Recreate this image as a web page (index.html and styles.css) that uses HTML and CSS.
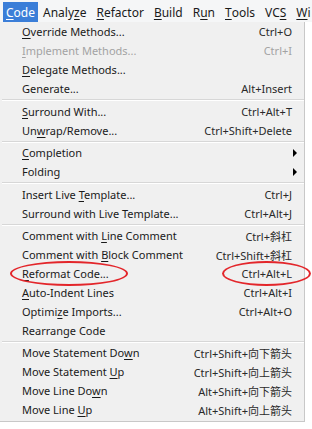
FILE: index.html
```html
<!DOCTYPE html>
<html lang="en">
<head>
  <meta charset="UTF-8" />
  <title>Code menu</title>
  <link rel="stylesheet" href="styles.css">
</head>
<body>
  <div class="menubar">
    <span class="top active"><u>C</u>ode</span>
    <span class="top">Analy<u>z</u>e</span>
    <span class="top"><u>R</u>efactor</span>
    <span class="top"><u>B</u>uild</span>
    <span class="top">R<u>u</u>n</span>
    <span class="top"><u>T</u>ools</span>
    <span class="top">VC<u>S</u></span>
    <span class="top last"><u>W</u>i</span>
  </div>

  <div class="menu">
    <div class="item"><span><u>O</u>verride Methods...</span><span class="key">Ctrl+O</span></div>
    <div class="item disabled"><span><u>I</u>mplement Methods...</span><span class="key">Ctrl+I</span></div>
    <div class="item"><span><u>D</u>elegate Methods...</span><span class="key"></span></div>
    <div class="item"><span>Generate...</span><span class="key">Alt+Insert</span></div>
    <div class="sep"></div>
    <div class="item"><span><u>S</u>urround With...</span><span class="key">Ctrl+Alt+T</span></div>
    <div class="item"><span>Un<u>w</u>rap/Remove...</span><span class="key">Ctrl+Shift+Delete</span></div>
    <div class="sep thin"></div>
    <div class="item"><span><u>C</u>ompletion</span><span class="arrow"></span></div>
    <div class="item"><span>Folding</span><span class="arrow"></span></div>
    <div class="sep"></div>
    <div class="item"><span>Insert Live <u>T</u>emplate...</span><span class="key">Ctrl+J</span></div>
    <div class="item"><span>Surround with Live Template...</span><span class="key">Ctrl+Alt+J</span></div>
    <div class="sep thin"></div>
    <div class="item"><span>Comment with <u>L</u>ine Comment</span><span class="key">Ctrl+斜杠</span></div>
    <div class="item"><span>Comment with <u>B</u>lock Comment</span><span class="key">Ctrl+Shift+斜杠</span></div>
    <div class="item marked">
      <span><u>R</u>eformat Code...</span><span class="key">Ctrl+Alt+L</span>
      <span class="ring ring-left"></span>
      <span class="ring ring-right"></span>
    </div>
    <div class="item"><span><u>A</u>uto-Indent Lines</span><span class="key">Ctrl+Alt+I</span></div>
    <div class="item"><span>Optimi<u>z</u>e Imports...</span><span class="key">Ctrl+Alt+O</span></div>
    <div class="item"><span>Rearrange Code</span><span class="key"></span></div>
    <div class="sep thin"></div>
    <div class="item"><span>Move Statement Do<u>w</u>n</span><span class="key">Ctrl+Shift+向下箭头</span></div>
    <div class="item"><span>Move Statement <u>U</u>p</span><span class="key">Ctrl+Shift+向上箭头</span></div>
    <div class="item"><span>Move Line Do<u>w</u>n</span><span class="key">Alt+Shift+向下箭头</span></div>
    <div class="item"><span>Move Line <u>U</u>p</span><span class="key">Alt+Shift+向上箭头</span></div>
  </div>
</body>
</html>
```

FILE: styles.css
```css
body {
  margin: 0;
  background: #ffffff;
  font-family: "Noto Sans", "Noto Sans CJK SC", sans-serif;
  font-size: 11px;
  color: #1a1a1a;
  width: 312px;
  overflow: hidden;
}

u {
  text-decoration-thickness: 1px;
  text-underline-offset: 2px;
}

.menubar {
  display: flex;
  height: 22px;
  align-items: stretch;
  padding-left: 3px;
  background: #f5f6f7;
  white-space: nowrap;
  overflow: hidden;
}

.top {
  display: flex;
  align-items: center;
  padding: 0 5px;
  font-size: 12px;
  margin-top: 2px;
}

.top.active {
  background: #3b7ed8;
  color: #ffffff;
  padding: 0 3px 0 3px;
}

.top.last {
  padding-right: 0;
}

.menu {
  width: 304px;
  background: #f0f0f0;
  border-right: 1px solid #c8c8c8;
  border-bottom: 1px solid #c8c8c8;
  padding: 0 0 2px 0;
}

.item {
  position: relative;
  display: flex;
  justify-content: space-between;
  align-items: center;
  height: 19px;
  padding: 0 12px 0 22px;
  white-space: nowrap;
}

.item.disabled {
  color: #a3a3a3;
}

.key {
  color: #2a2a2a;
}

.item.disabled .key {
  color: #a3a3a3;
}

.arrow {
  width: 0;
  height: 0;
  border-top: 4px solid transparent;
  border-bottom: 4px solid transparent;
  border-left: 4px solid #000000;
  margin-right: -5px;
}

.sep {
  height: 1px;
  background: #d7d7d7;
  border-bottom: 1px solid #ffffff;
  margin: 1px 0 1px 2px;
}

.sep.thin {
  margin-bottom: 0;
}

/* red hand-drawn marks over the Reformat row */
.ring {
  position: absolute;
  border: 2px solid #e3262b;
  border-radius: 50%;
  top: -3px;
  height: 21px;
}

.ring-left {
  left: 10px;
  width: 114px;
}

.ring-right {
  left: 222px;
  width: 85px;
}
```
